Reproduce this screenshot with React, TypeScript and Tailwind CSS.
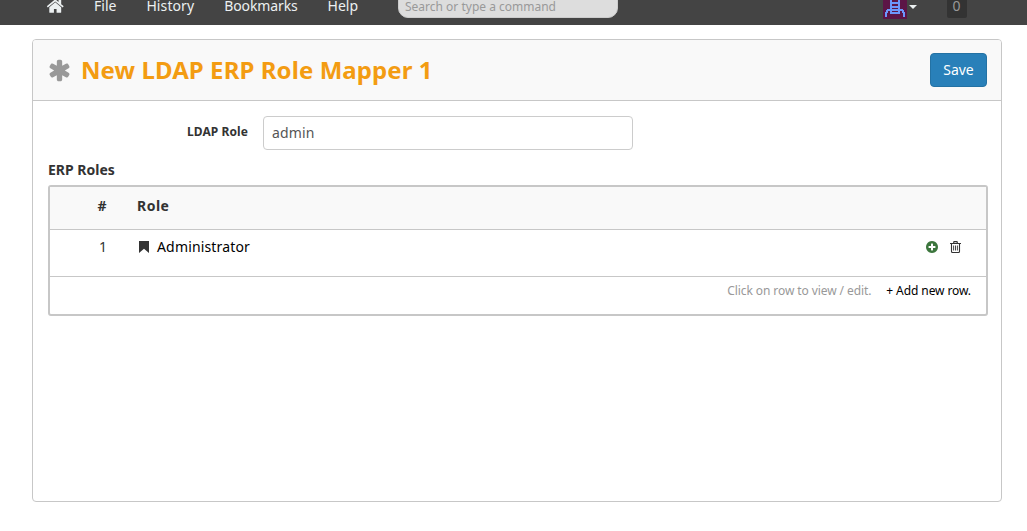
const icons = {
  home: "M1472 992v480q0 26-19 45t-45 19h-384v-384h-256v384h-384q-26 0-45-19t-19-45v-480q0-1 .5-3t.5-3l575-474 575 474q1 2 1 6zm223-69l-62 74q-8 9-21 11h-3q-13 0-21-7l-692-577-692 577q-12 8-24 7-13-2-21-11l-62-74q-8-10-7-23.5t11-21.5l719-599q32-26 76-26t76 26l244 204v-195q0-14 9-23t23-9h192q14 0 23 9t9 23v408l219 182q10 8 11 21.5t-7 23.5z",
  asterisk: "M1546 1050q46 26 59.5 77.5t-12.5 97.5l-64 110q-26 46-77.5 59.5t-97.5-12.5l-266-153v307q0 52-38 90t-90 38h-128q-52 0-90-38t-38-90v-307l-266 153q-46 26-97.5 12.5t-77.5-59.5l-64-110q-26-46-12.5-97.5t59.5-77.5l266-154-266-154q-46-26-59.5-77.5t12.5-97.5l64-110q26-46 77.5-59.5t97.5 12.5l266 153v-307q0-52 38-90t90-38h128q52 0 90 38t38 90v307l266-153q46-26 97.5-12.5t77.5 59.5l64 110q26 46 12.5 97.5t-59.5 77.5l-266 154z",
  plus: "M1344 960v-128q0-26-19-45t-45-19h-256v-256q0-26-19-45t-45-19h-128q-26 0-45 19t-19 45v256h-256q-26 0-45 19t-19 45v128q0 26 19 45t45 19h256v256q0 26 19 45t45 19h128q26 0 45-19t19-45v-256h256q26 0 45-19t19-45zm320-64q0 209-103 385.5t-279.5 279.5-385.5 103-385.5-103-279.5-279.5-103-385.5 103-385.5 279.5-279.5 385.5-103 385.5 103 279.5 279.5 103 385.5z",
};

function Icon({ d, className, box = "0 0 1792 1792" }: { d: string; className: string; box?: string }) {
  return (
    <svg viewBox={box} className={className} fill="currentColor" aria-hidden="true">
      <path d={d} />
    </svg>
  );
}

function TrashIcon() {
  return (
    <svg
      viewBox="0 0 11 12"
      className="mr-[25px] ml-[11px] h-3 w-[11px]"
      fill="none"
      stroke="currentColor"
      strokeWidth="1.1"
      aria-hidden="true"
    >
      <path d="M0 2.500h11M3.500 2.500L4 .6h3l.5 1.900M1.500 2.500v8q0 1 1 1h6q1 0 1-1v-8" />
      <path d="M3.600 4.500v5M5.500 4.500v5M7.400 4.500v5" strokeWidth=".9" />
    </svg>
  );
}

function Avatar() {
  return (
    <svg viewBox="0 0 24 19" className="block h-[19px] w-6" shapeRendering="crispEdges" aria-hidden="true">
      <path fill="#5c1546" d="M0 0h24v19H0z" />
      <path
        fill="#6c97fb"
        d="M7 0h2v14H7zM15 0h2v14h-2zM9 2h6v2H9zM9 6h6v2H9zM4 9h16v2H4zM7 12h10v2H7zM3 10h2v3H3zM19 10h2v3h-2zM2 12h2v5H2zM20 12h2v5h-2z"
      />
    </svg>
  );
}

function Navbar() {
  return (
    <header className="flex h-[25px] items-start bg-[#444] text-sm leading-3 text-[#ecf0f1]">
      <Icon d={icons.home} className="-mt-[3px] ml-[46px] size-[18.500px] shrink-0" />
      <nav className="ml-[29.500px] flex w-[304px] gap-[30px]">
        <a>File</a>
        <a className="tracking-[0.1px]">History</a>
        <a className="tracking-[-0.12px]">Bookmarks</a>
        <a>Help</a>
      </nav>
      <div className="-mt-2.5 flex h-7 w-[220px] items-end rounded-[10px] border border-[#ccc] bg-[#ddd] pb-px pl-1.5 text-xs leading-[18px] text-[#999]">
        Search or type a command
      </div>
      <div className="ml-auto flex">
        <Avatar />
        <span className="mt-[5px] ml-0.5 h-0 w-0 border-x-4 border-t-4 border-x-transparent border-t-[#ecf0f1]" />
      </div>
      <div className="mr-[60px] ml-[30px] h-[18px] w-5 rounded-b-[2px] bg-[#333] pr-px text-center text-[#999]">
        0
      </div>
    </header>
  );
}

function RolesTable() {
  return (
    <section className="h-[131px] w-[940px] rounded-[3px] border-2 border-[#c7c7c7]">
      <div className="flex h-[43px] items-center border-b border-[#c7c7c7] bg-[#f9f9f9] pb-1 font-bold">
        <span className="w-[56.500px] text-right">#</span>
        <span className="ml-[30.500px] tracking-[0.5px]">Role</span>
      </div>
      <div className="flex h-[47px] items-center border-b border-[#c7c7c7] pb-3">
        <span className="w-[57px] text-right">1</span>
        <Icon d="M0 0h10v12L5 7.700 0 12z" box="0 0 10 12" className="ml-8 h-3 w-2.5" />
        <span className="ml-2 tracking-[0.16px] text-black">Administrator</span>
        <Icon d={icons.plus} className="ml-auto size-[14px] text-[#3c763d]" />
        <TrashIcon />
      </div>
      <div className="flex justify-end pt-1 pr-[15px] text-xs leading-5 tracking-[-0.09px] text-[#999]">
        <span>Click on row to view / edit.</span>
        <span className="ml-[15px] text-black">+ Add new row.</span>
      </div>
    </section>
  );
}

export default function App() {
  return (
    <div className="h-[531px] overflow-hidden bg-white font-['Noto_Sans','Open_Sans',sans-serif] text-sm leading-5 text-[#333]">
      <Navbar />
      <main className="mt-3.5 ml-8 h-[463px] w-[970px] rounded-[4px] border border-[#c7c7c7]">
        <div className="flex h-[61px] items-center rounded-t-[3px] border-b border-[#c7c7c7] bg-[#f9f9f9] pr-3.5 pl-[14px]">
          <Icon d={icons.asterisk} className="size-[25px] text-[#999]" />
          <h1 className="ml-[9px] text-2xl leading-8 font-bold tracking-[0.08px] text-[#f39c12]">
            New LDAP ERP Role Mapper 1
          </h1>
          <button className="ml-auto h-[34px] w-[57px] rounded-[4px] border border-[#2472a4] bg-[#2980b9] text-white">
            Save
          </button>
        </div>
        <div className="px-[15px] pt-[15px]">
          <div className="flex items-start">
            <label className="mt-1.5 w-[200px] text-right text-xs leading-5 font-bold tracking-[0.08px]">
              LDAP Role
            </label>
            <div className="ml-[15px] flex h-[34px] w-[370px] items-center rounded-[4px] border border-[#ccc] px-2 tracking-[0.15px] text-[#555]">
              admin
            </div>
          </div>
          <h2 className="mt-[10px] mb-[5px] leading-5 font-bold">ERP Roles</h2>
          <RolesTable />
        </div>
      </main>
    </div>
  );
}
